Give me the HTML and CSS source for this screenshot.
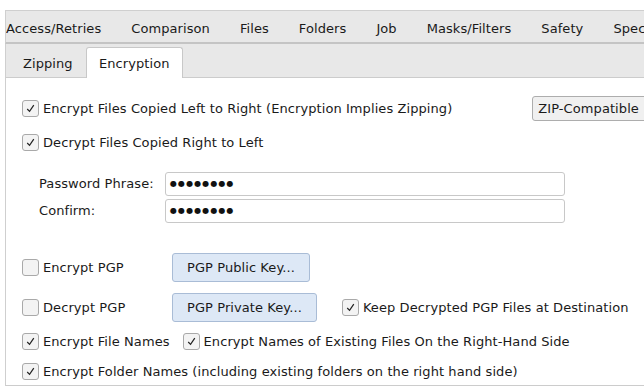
FILE: index.html
```html
<!DOCTYPE html>
<html>
<head>
<meta charset="utf-8">
<link rel="stylesheet" href="styles.css">
</head>
<body>
<div class="window">
  <div class="tabs-main">
    <span class="tab first">Access/Retries</span>
    <span class="tab">Comparison</span>
    <span class="tab">Files</span>
    <span class="tab">Folders</span>
    <span class="tab">Job</span>
    <span class="tab">Masks/Filters</span>
    <span class="tab">Safety</span>
    <span class="tab">Spec</span>
  </div>
  <div class="tabs-sub">
    <span class="subtab">Zipping</span>
    <span class="subtab active">Encryption</span>
  </div>
  <div class="content">
    <div class="row r1">
      <label class="check"><span class="box on"><svg viewBox="0 0 16 16"><path d="M4.5 8.5 L7 11 L11.5 4.5"/></svg></span>Encrypt Files Copied Left to Right (Encryption Implies Zipping)</label>
      <button class="btn gray zip">ZIP-Compatible</button>
    </div>
    <div class="row r2">
      <label class="check"><span class="box on"><svg viewBox="0 0 16 16"><path d="M4.5 8.5 L7 11 L11.5 4.5"/></svg></span>Decrypt Files Copied Right to Left</label>
    </div>
    <div class="form">
      <span class="flabel">Password Phrase:</span>
      <div class="input"><span class="dots">●●●●●●●●</span></div>
      <span class="flabel">Confirm:</span>
      <div class="input"><span class="dots">●●●●●●●●</span></div>
    </div>
    <div class="row pgp p1">
      <label class="check wide"><span class="box"></span>Encrypt PGP</label>
      <button class="btn blue">PGP Public Key...</button>
    </div>
    <div class="row pgp p2">
      <label class="check wide"><span class="box"></span>Decrypt PGP</label>
      <button class="btn blue">PGP Private Key...</button>
      <label class="check keep"><span class="box on"><svg viewBox="0 0 16 16"><path d="M4.5 8.5 L7 11 L11.5 4.5"/></svg></span>Keep Decrypted PGP Files at Destination</label>
    </div>
    <div class="row r3">
      <label class="check"><span class="box on"><svg viewBox="0 0 16 16"><path d="M4.5 8.5 L7 11 L11.5 4.5"/></svg></span>Encrypt File Names</label>
      <label class="check existing"><span class="box on"><svg viewBox="0 0 16 16"><path d="M4.5 8.5 L7 11 L11.5 4.5"/></svg></span>Encrypt Names of Existing Files On the Right-Hand Side</label>
    </div>
    <div class="row r4">
      <label class="check"><span class="box on"><svg viewBox="0 0 16 16"><path d="M4.5 8.5 L7 11 L11.5 4.5"/></svg></span>Encrypt Folder Names (including existing folders on the right hand side)</label>
    </div>
  </div>
</div>
</body>
</html>
```
FILE: styles.css
```css
html, body {
  margin: 0;
  padding: 0;
  background: #ffffff;
  overflow: hidden;
}
body {
  font-family: "DejaVu Sans", Verdana, sans-serif;
  font-size: 13px;
  letter-spacing: 0.08px;
  color: #1a1a1a;
  width: 644px;
  height: 390px;
}
.window {
  padding: 10px 0 0 5px;
}
.tabs-main {
  display: flex;
  align-items: center;
  padding-top: 3px;
  box-sizing: border-box;
  height: 34px;
  background: #e8e8e8;
  border-top: 1px solid #cfcfcf;
  border-left: 1px solid #cfcfcf;
  border-bottom: 2px solid #c4c4c4;
  white-space: nowrap;
  overflow: hidden;
}
.tab {
  padding: 0 15px;
  flex: none;
}
.tab.first {
  padding-left: 0;
}
.tabs-sub {
  display: flex;
  align-items: flex-end;
  height: 33px;
  background: #e8e8e8;
  border-left: 1px solid #cfcfcf;
  border-bottom: 1px solid #cccccc;
}
.subtab {
  display: flex;
  align-items: center;
  height: 30px;
  padding: 0 16px;
  margin-bottom: -1px;
  border: 1px solid transparent;
  border-bottom: none;
}
.subtab:first-child {
  padding-left: 16px;
  width: 48px;
}
.subtab.active {
  background: #ffffff;
  border-color: #c8c8c8;
  border-radius: 3px 3px 0 0;
  padding: 0 12px 0 12px;
  margin-left: -2px;
  height: 30px;
}
.content {
  border-left: 1px solid #cfcfcf;
  border-bottom: 1px solid #cccccc;
  height: 308px;
  padding-left: 16px;
  display: flex;
  flex-direction: column;
  box-sizing: border-box;
}
.row {
  display: flex;
  align-items: center;
  height: 24px;
  white-space: nowrap;
  flex: none;
}
.r1 { margin-top: 18px; }
.r2 { margin-top: 10px; }
.check {
  display: flex;
  align-items: center;
  flex: none;
}
.box {
  width: 15px;
  height: 15px;
  border: 1px solid #a9a9a9;
  border-radius: 3px;
  background: #f3f3f3;
  margin-right: 4px;
  display: flex;
  flex: none;
}
.box svg {
  width: 15px;
  height: 15px;
}
.box svg path {
  fill: none;
  stroke: #222;
  stroke-width: 1.3;
}
.btn {
  font-family: "DejaVu Sans", Verdana, sans-serif;
  font-size: 13px;
  letter-spacing: 0.08px;
  color: #1a1a1a;
  border-radius: 3px;
  padding: 0 14px;
  flex: none;
}
.btn.gray {
  background: #f0f0f0;
  border: 1px solid #adadad;
  height: 25px;
  padding: 0 8px 0 5px;
}
.zip {
  margin-left: 80px;
}
.form {
  margin-top: 18px;
  padding-left: 17px;
  display: grid;
  grid-template-columns: 126px 400px;
  grid-auto-rows: 23px;
  row-gap: 4px;
  align-items: center;
}
.input {
  height: 24px;
  box-sizing: border-box;
  border: 1px solid #c8c8c8;
  border-radius: 3px;
  display: flex;
  align-items: center;
  padding-left: 4px;
}
.dots {
  font-size: 8px;
  letter-spacing: 1.1px;
  color: #111;
}
.pgp {
  height: 28px;
}
.p1 { margin-top: 31px; }
.p2 { margin-top: 12px; }
.wide {
  width: 150px;
}
.btn.blue {
  background: #dde8f6;
  border: 1px solid #a9bcd6;
  height: 29px;
}
.keep {
  margin-left: 25px;
}
.r3 { margin-top: 8px; }
.r4 { margin-top: 6px; }
.existing {
  margin-left: 13px;
}
```
